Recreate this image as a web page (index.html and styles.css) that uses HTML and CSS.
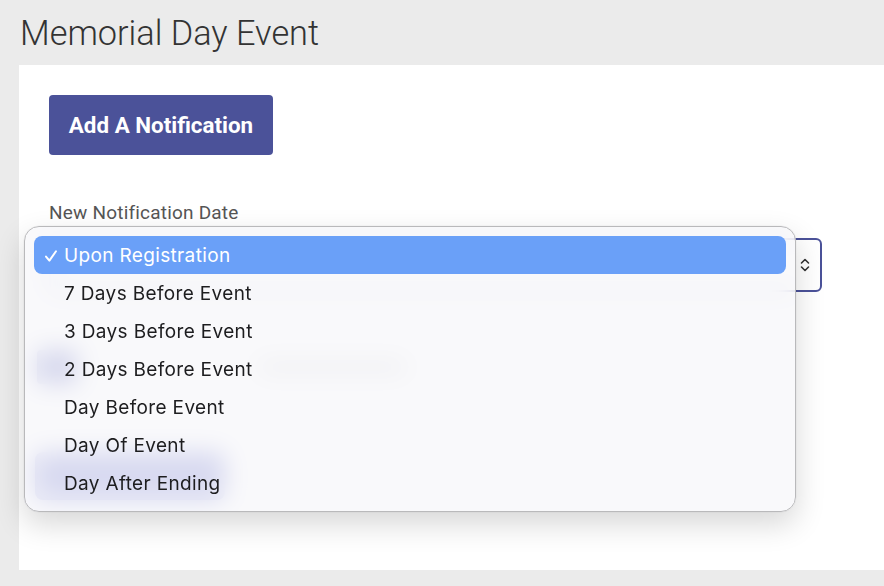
FILE: index.html
```html
<!DOCTYPE html>
<html lang="en">
<head>
<meta charset="utf-8">
<title>Memorial Day Event</title>
<link rel="stylesheet" href="styles.css">
</head>
<body>
<h1 class="page-title">Memorial Day Event</h1>
<main class="card">
  <button class="btn-primary" type="button">Add A Notification</button>
  <div class="field">
    <label class="field-label">New Notification Date</label>
    <div class="select-box" aria-label="Upon Registration">
      <span class="select-value"></span>
      <svg class="chevrons" width="10" height="16" viewBox="0 0 10 16" aria-hidden="true">
        <path d="M1.5 6 L5 2.5 L8.5 6" fill="none" stroke="#333" stroke-width="1.6" stroke-linecap="round" stroke-linejoin="round"/>
        <path d="M1.5 10 L5 13.5 L8.5 10" fill="none" stroke="#333" stroke-width="1.6" stroke-linecap="round" stroke-linejoin="round"/>
      </svg>
    </div>
  </div>
  <div class="row-behind">
    <span class="chip-behind"></span>
    <span class="text-behind"></span>
  </div>
  <div class="row-behind-2">
    <span class="btn-behind"></span>
  </div>

  <ul class="menu">
    <li class="menu-item selected"><svg class="check" width="14" height="14" viewBox="0 0 14 14" aria-hidden="true"><path d="M2 7.6 L5.4 11.6 L12 2.2" fill="none" stroke="#fff" stroke-width="2" stroke-linecap="round" stroke-linejoin="round"/></svg>Upon Registration</li>
    <li class="menu-item">7 Days Before Event</li>
    <li class="menu-item">3 Days Before Event</li>
    <li class="menu-item">2 Days Before Event</li>
    <li class="menu-item">Day Before Event</li>
    <li class="menu-item">Day Of Event</li>
    <li class="menu-item">Day After Ending</li>
  </ul>
</main>
</body>
</html>
```

FILE: styles.css
```css
* { box-sizing: border-box; }

html, body {
  margin: 0;
  padding: 0;
}

body {
  background: #ebebeb;
  font-family: Roboto, "Liberation Sans", sans-serif;
  width: 884px;
  height: 586px;
  overflow: hidden;
}

.page-title {
  margin: 0;
  padding: 12px 0 0 20px;
  height: 65px;
  font-family: Roboto, sans-serif;
  font-weight: 300;
  font-size: 34.3px;
  line-height: 42px;
  color: #333;
}

.card {
  position: relative;
  margin-left: 19px;
  background: #fff;
  height: 505px;
  padding: 30px 30px;
}

.btn-primary {
  display: block;
  width: 224px;
  height: 60px;
  border: none;
  border-radius: 4px;
  background: #4b5299;
  color: #fff;
  font-family: Roboto, sans-serif;
  font-weight: 700;
  font-size: 22.4px;
  padding: 0;
}

.field {
  margin-top: 46px;
}

.field-label {
  display: block;
  font-size: 19px;
  letter-spacing: 0.2px;
  line-height: 24px;
  color: #555;
}

.select-box {
  margin-top: 13px;
  width: 773px;
  height: 54px;
  border: 2px solid #4b5299;
  border-radius: 6px;
  display: flex;
  align-items: center;
  justify-content: space-between;
  padding: 0 10px 0 14px;
}

.chevrons { display: block; }

.row-behind {
  margin-top: 58px;
  display: flex;
  align-items: center;
  gap: 180px;
}

.chip-behind {
  width: 40px;
  height: 34px;
  margin-left: -12px;
  border-radius: 4px;
  background: #5058b8;
}

.text-behind {
  width: 150px;
  height: 12px;
  border-radius: 6px;
  background: #c8c8cc;
}

.row-behind-2 {
  margin-top: 68px;
}

.btn-behind {
  display: block;
  width: 190px;
  height: 48px;
  margin-left: -14px;
  border-radius: 8px;
  background: #5a62c8;
}

.menu {
  position: absolute;
  left: 5px;
  top: 161px;
  width: 772px;
  height: 286px;
  margin: 0;
  padding: 9px 9px;
  list-style: none;
  background: rgba(248, 248, 250, 0.8);
  -webkit-backdrop-filter: blur(12px);
  backdrop-filter: blur(12px);
  border: 1px solid #b9b9bb;
  border-radius: 15px;
  box-shadow: 0 12px 30px rgba(0, 0, 0, 0.16), 0 0 0 0.5px rgba(0,0,0,0.05);
  font-family: Inter, "Noto Sans", sans-serif;
  font-size: 19px;
  color: #1d1d1f;
}

.menu-item {
  height: 38px;
  line-height: 39px;
  padding-left: 30px;
  border-radius: 8px;
  position: relative;
  letter-spacing: 0.35px;
}

.menu-item.selected {
  background: #6aa0f8;
  color: #fff;
}

.check {
  position: absolute;
  left: 10px;
  top: 13px;
}
```
